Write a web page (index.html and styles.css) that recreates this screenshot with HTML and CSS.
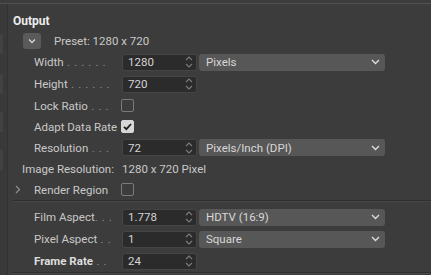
FILE: index.html
```html
<!DOCTYPE html>
<html>
<head>
<meta charset="utf-8">
<link rel="stylesheet" href="styles.css">
</head>
<body>
<div class="frame">
  <div class="strip">
    <div class="blk b1"></div><div class="blk b2"></div><div class="blk b3"></div><div class="blk b4"></div>
  </div>
  <div class="content">
    <div class="title">Output</div>
    <div class="preset">
      <div class="pbtn"><svg width="8" height="6" viewBox="0 0 8 6"><path d="M1 1.5 L4 4.5 L7 1.5" fill="none" stroke="#d6d6d6" stroke-width="1.3"/></svg></div>
      <span class="ptext">Preset: 1280 x 720</span>
    </div>
    <div class="group g1">
      <div class="row tall">
        <div class="label">Width<span class="dots"> . . . . . .</span></div>
        <div class="num"><span>1280</span><i class="spin"><svg width="8" height="14" viewBox="0 0 8 14"><path d="M1 5 L4 2 L7 5 M1 9 L4 12 L7 9" fill="none" stroke="#7d7d7d" stroke-width="1.1"/></svg></i></div>
        <div class="sel"><span>Pixels</span><svg width="9" height="6" viewBox="0 0 9 6"><path d="M1 1 L4.5 4.5 L8 1" fill="none" stroke="#dcdcdc" stroke-width="1.4"/></svg></div>
      </div>
      <div class="row tall">
        <div class="label">Height<span class="dots"> . . . . . .</span></div>
        <div class="num"><span>720</span><i class="spin"><svg width="8" height="14" viewBox="0 0 8 14"><path d="M1 5 L4 2 L7 5 M1 9 L4 12 L7 9" fill="none" stroke="#7d7d7d" stroke-width="1.1"/></svg></i></div>
      </div>
      <div class="row">
        <div class="label">Lock Ratio<span class="dots"> . . .</span></div>
        <div class="check"></div>
      </div>
      <div class="row">
        <div class="label">Adapt Data Rate</div>
        <div class="check on"><svg width="11" height="11" viewBox="0 0 11 11"><path d="M2 5.8 L4.4 8.2 L9 3" fill="none" stroke="#1e1e1e" stroke-width="1.8"/></svg></div>
      </div>
      <div class="row">
        <div class="label">Resolution<span class="dots"> . . .</span></div>
        <div class="num"><span>72</span><i class="spin"><svg width="8" height="14" viewBox="0 0 8 14"><path d="M1 5 L4 2 L7 5 M1 9 L4 12 L7 9" fill="none" stroke="#7d7d7d" stroke-width="1.1"/></svg></i></div>
        <div class="sel"><span>Pixels/Inch (DPI)</span><svg width="9" height="6" viewBox="0 0 9 6"><path d="M1 1 L4.5 4.5 L8 1" fill="none" stroke="#dcdcdc" stroke-width="1.4"/></svg></div>
      </div>
      <div class="row">
        <div class="label wide">Image Resolution:</div>
        <div class="value">1280 x 720 Pixel</div>
      </div>
      <div class="row">
        <div class="label arrowed"><svg class="arr" width="6" height="9" viewBox="0 0 6 9"><path d="M1 1 L4.5 4.5 L1 8" fill="none" stroke="#8c8c8c" stroke-width="1.3"/></svg>Render Region</div>
        <div class="check"></div>
      </div>
    </div>
    <div class="sep"></div>
    <div class="group g2">
      <div class="row">
        <div class="label">Film Aspect<span class="dots">. . .</span></div>
        <div class="num"><span>1.778</span><i class="spin"><svg width="8" height="14" viewBox="0 0 8 14"><path d="M1 5 L4 2 L7 5 M1 9 L4 12 L7 9" fill="none" stroke="#7d7d7d" stroke-width="1.1"/></svg></i></div>
        <div class="sel"><span>HDTV (16:9)</span><svg width="9" height="6" viewBox="0 0 9 6"><path d="M1 1 L4.5 4.5 L8 1" fill="none" stroke="#dcdcdc" stroke-width="1.4"/></svg></div>
      </div>
      <div class="row">
        <div class="label">Pixel Aspect<span class="dots"> . .</span></div>
        <div class="num"><span>1</span><i class="spin"><svg width="8" height="14" viewBox="0 0 8 14"><path d="M1 5 L4 2 L7 5 M1 9 L4 12 L7 9" fill="none" stroke="#7d7d7d" stroke-width="1.1"/></svg></i></div>
        <div class="sel"><span>Square</span><svg width="9" height="6" viewBox="0 0 9 6"><path d="M1 1 L4.5 4.5 L8 1" fill="none" stroke="#dcdcdc" stroke-width="1.4"/></svg></div>
      </div>
      <div class="row">
        <div class="label bold">Frame Rate<span class="dots"> . .</span></div>
        <div class="num"><span>24</span><i class="spin"><svg width="8" height="14" viewBox="0 0 8 14"><path d="M1 5 L4 2 L7 5 M1 9 L4 12 L7 9" fill="none" stroke="#7d7d7d" stroke-width="1.1"/></svg></i></div>
      </div>
    </div>
    <div class="sep bottom"></div>
  </div>
</div>
</body>
</html>
```
FILE: styles.css
```css
html, body {
  margin: 0;
  padding: 0;
  background: #3c3c3c;
}
body {
  font-family: Roboto, "Noto Sans", sans-serif;
  font-size: 11.5px;
  color: #c9c9c9;
  width: 431px;
  height: 275px;
  overflow: hidden;
}
.frame {
  display: flex;
  height: 275px;
  border-top: 1px solid #525252;
  margin-top: 3px;
  box-sizing: border-box;
}
.strip {
  width: 7px;
  flex: none;
  background: #393939;
  border-right: 1px solid #323232;
  position: relative;
}
.blk {
  position: absolute;
  left: 0;
  width: 3px;
  background: #424242;
}
.b1 { top: 30px; height: 20px; }
.b2 { top: 70px; height: 20px; }
.b3 { top: 108px; height: 20px; }
.b4 { top: 146px; height: 20px; }
.content {
  flex: 1;
  padding-left: 2px;
}
.title {
  font-weight: bold;
  font-size: 12px;
  color: #ececec;
  height: 16px;
  line-height: 16px;
  margin-top: 9px;
  padding-left: 3px;
}
.preset {
  display: flex;
  align-items: center;
  height: 16px;
  margin-top: 4px;
  padding-left: 13px;
}
.pbtn {
  width: 18px;
  height: 16px;
  border-radius: 3px;
  background: #5a5a5a;
  display: flex;
  align-items: center;
  justify-content: center;
}
.ptext {
  margin-left: 13px;
  color: #c9c9c9;
}
.group.g1 { margin-top: 2px; }
.row {
  display: flex;
  align-items: center;
  height: 21px;
}
.row.tall { height: 22px; }
.g2 .row { height: 22px; }
.label {
  width: 88px;
  padding-left: 24px;
  flex: none;
  white-space: nowrap;
  overflow: hidden;
  color: #c9c9c9;
}
.label.wide {
  padding-left: 12px;
  width: 100px;
}
.label.arrowed {
  padding-left: 5px;
  width: 107px;
  display: flex;
  align-items: center;
}
.arr { margin-right: 13px; }
.label.bold {
  font-weight: bold;
  color: #dedede;
}
.dots {
  color: #8e8e8e;
  font-weight: normal;
  letter-spacing: 0.6px;
}
.num {
  width: 75px;
  height: 17px;
  box-sizing: border-box;
  background: #2b2b2b;
  border: 1px solid #454545;
  border-radius: 3px;
  display: flex;
  align-items: center;
  justify-content: space-between;
  padding-left: 5px;
  padding-right: 3px;
  color: #d4d4d4;
  flex: none;
}
.spin {
  display: flex;
  align-items: center;
}
.sel {
  margin-left: 2px;
  width: 186px;
  height: 17px;
  box-sizing: border-box;
  background: #575757;
  border-radius: 3px;
  display: flex;
  align-items: center;
  justify-content: space-between;
  padding-left: 7px;
  padding-right: 5px;
  color: #d8d8d8;
  flex: none;
}
.check {
  width: 13px;
  height: 13px;
  box-sizing: border-box;
  border: 1px solid #7a7a7a;
  border-radius: 2px;
  flex: none;
  display: flex;
  align-items: center;
  justify-content: center;
  margin-left: -1px;
}
.check.on {
  background: #d7d7d7;
  border-color: #d7d7d7;
}
.value {
  color: #c9c9c9;
}
.sep {
  height: 1px;
  background: #2e2e2e;
  border-bottom: 1px solid #474747;
  margin: 0 0 4px 2px;
}
.sep.bottom {
  margin-top: 0;
}
```
